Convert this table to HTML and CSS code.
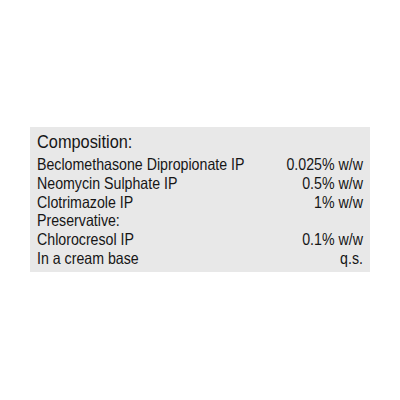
FILE: index.html
```html
<!DOCTYPE html>
<html>
<head>
<meta charset="utf-8">
<link rel="stylesheet" href="styles.css">
</head>
<body>
<div class="panel">
  <div class="content">
    <div class="title">Composition:</div>
    <div class="row"><span>Beclomethasone Dipropionate IP</span><span>0.025% w/w</span></div>
    <div class="row"><span>Neomycin Sulphate IP</span><span>0.5% w/w</span></div>
    <div class="row"><span>Clotrimazole IP</span><span>1% w/w</span></div>
    <div class="row"><span>Preservative:</span><span></span></div>
    <div class="row"><span>Chlorocresol IP</span><span>0.1% w/w</span></div>
    <div class="row"><span>In a cream base</span><span>q.s.</span></div>
  </div>
</div>
</body>
</html>
```
FILE: styles.css
```css
html, body {
  margin: 0;
  padding: 0;
  background: #ffffff;
}
body {
  padding: 127px 30px 0 30px;
  font-family: "Liberation Sans", Arial, sans-serif;
  color: #161616;
}
.panel {
  width: 340px;
  height: 145px;
  box-sizing: border-box;
  background: #e8e8e8;
  padding: 4px 7px 0 7px;
  overflow: hidden;
}
.content {
  width: 379px;
  transform: scaleX(0.86);
  transform-origin: left top;
}
.title {
  font-size: 19px;
  line-height: 22px;
  margin-bottom: 2px;
}
.row {
  display: flex;
  justify-content: space-between;
  font-size: 16.5px;
  line-height: 18.8px;
}
```
